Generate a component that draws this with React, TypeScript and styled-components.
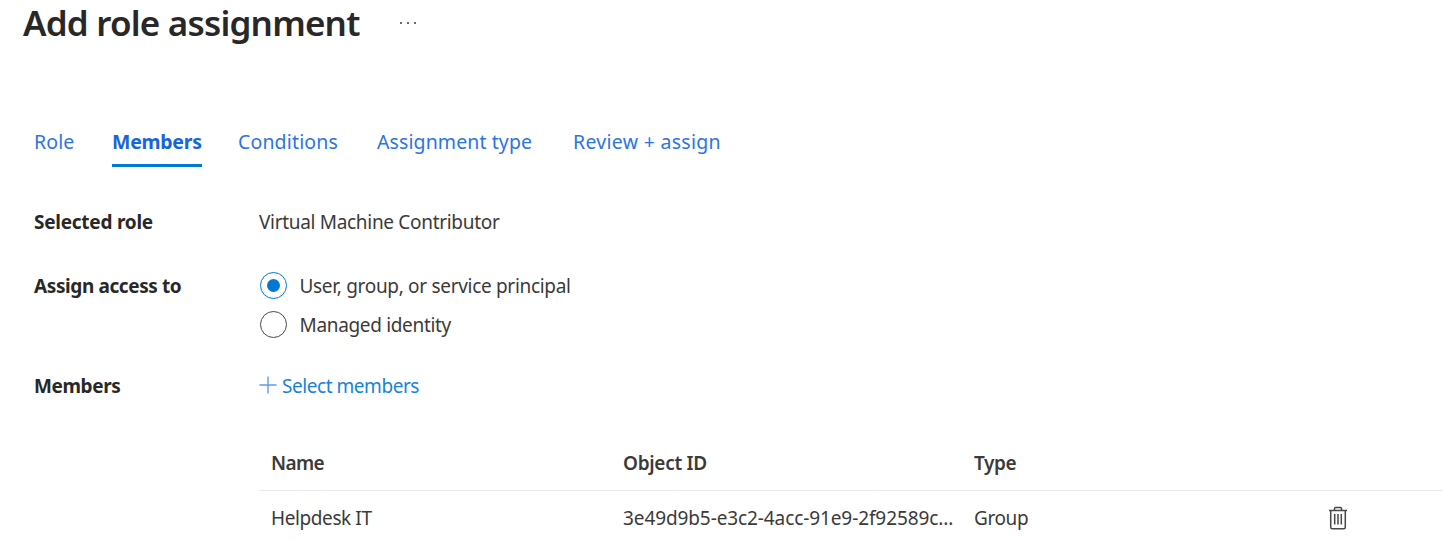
import React from "react";
import styled, { createGlobalStyle } from "styled-components";

const GlobalStyle = createGlobalStyle`
  * { box-sizing: border-box; }
  body {
    margin: 0;
    background: #fff;
    color: #3b3a39;
    font-family: "Noto Sans", "Open Sans", sans-serif;
    font-size: 19px;
    line-height: 26px;
    overflow: hidden;
  }
`;

const Page = styled.main`
  width: 1443px;
  height: 541px;
  overflow: hidden;
`;

const Header = styled.header`
  display: flex;
  align-items: center;
  gap: 39px;
  height: 45px;
  padding-left: 23px;
`;

const Title = styled.h1`
  margin: 0;
  min-width: 337px;
  font-size: 35px;
  line-height: 44px;
  font-weight: 600;
  letter-spacing: -0.8px;
  color: #292827;
  white-space: nowrap;
`;

const Tabs = styled.nav`
  display: flex;
  margin-top: 84px;
  padding-left: 34px;
`;

const Tab = styled.a<{ $width: number; $gap: number; $track: number; $active?: boolean }>`
  width: ${(p) => p.$width}px;
  height: 38px;
  margin-right: ${(p) => p.$gap}px;
  border-bottom: 3px solid ${(p) => (p.$active ? "#0078d4" : "transparent")};
  font-size: 19.5px;
  font-weight: ${(p) => (p.$active ? 700 : 400)};
  letter-spacing: ${(p) => p.$track}px;
  color: ${(p) => (p.$active ? "#1765dc" : "#2b74e4")};
  white-space: nowrap;
`;

const Field = styled.section<{ $top: number }>`
  display: grid;
  grid-template-columns: 225px 1fr;
  margin-top: ${(p) => p.$top}px;
  padding-left: 34px;
`;

const Label = styled.div<{ $track: number }>`
  font-weight: 700;
  letter-spacing: ${(p) => p.$track}px;
  color: #292827;
`;

const Text = styled.span<{ $track: number }>`
  letter-spacing: ${(p) => p.$track}px;
  white-space: nowrap;
`;

const Options = styled.div`
  display: flex;
  flex-direction: column;
  gap: 13px;
`;

const Option = styled.label`
  display: flex;
  align-items: center;
  height: 26px;
  gap: 12.5px;
  padding-left: 1px;
`;

const Radio = styled.span<{ $checked?: boolean }>`
  display: grid;
  place-items: center;
  width: 27px;
  height: 27px;
  margin-bottom: 1px;
  border: 1.5px solid ${(p) => (p.$checked ? "#0078d4" : "#494847")};
  border-radius: 50%;

  &::after {
    content: "";
    width: 13px;
    height: 13px;
    border-radius: 50%;
    background: ${(p) => (p.$checked ? "#0078d4" : "transparent")};
  }
`;

const SelectLink = styled.a`
  display: flex;
  align-items: center;
  gap: 5px;
  color: #1683db;

  svg {
    margin-bottom: 3px;
  }
`;

const Table = styled.div`
  margin: 40px 0 0 259px;
`;

const Row = styled.div<{ $head?: boolean }>`
  display: grid;
  grid-template-columns: 352px 351px 354px 1fr;
  align-items: center;
  height: ${(p) => (p.$head ? 52 : 54)}px;
  padding-left: 12px;
  padding-bottom: ${(p) => (p.$head ? 3 : 0)}px;
  border-bottom: ${(p) => (p.$head ? "1px solid #edebe9" : "0")};
  font-weight: ${(p) => (p.$head ? 600 : 400)};
`;

const Dots = () => (
  <svg width="18" height="4" viewBox="0 0 18 4" fill="#6b6a69">
    <rect x="1" y="1" width="2" height="2" />
    <rect x="8" y="1" width="2" height="2" />
    <rect x="15" y="1" width="2" height="2" />
  </svg>
);

const Plus = () => (
  <svg width="18" height="18" viewBox="0 0 18 18" stroke="#5b9fe8" strokeWidth="1.4">
    <path d="M9 0.5v17M0.5 9h17" />
  </svg>
);

const Trash = () => (
  <svg width="20" height="24" viewBox="0 0 20 24" fill="none" stroke="#494847" strokeWidth="1.5">
    <path d="M1 4.5h18M6.5 4V2.4q0-1 1-1h5q1 0 1 1V4M2.7 4.5v16.7q0 1.5 1.5 1.5h11.6q1.5 0 1.5-1.5V4.5" />
    <path d="M6.7 8v10.5M10 8v10.5M13.3 8v10.5" />
  </svg>
);

export default function App() {
  return (
    <Page>
      <GlobalStyle />
      <Header>
        <Title>Add role assignment</Title>
        <Dots />
      </Header>
      <Tabs>
        <Tab $width={40} $gap={38} $track={0.1}>Role</Tab>
        <Tab $width={90} $gap={36} $track={-0.25} $active>Members</Tab>
        <Tab $width={100} $gap={39} $track={0.15}>Conditions</Tab>
        <Tab $width={155} $gap={41} $track={0.1}>Assignment type</Tab>
        <Tab $width={148} $gap={0} $track={0.28}>Review + assign</Tab>
      </Tabs>
      <Field $top={42}>
        <Label $track={-0.25}>Selected role</Label>
        <Text $track={-0.31}>Virtual Machine Contributor</Text>
      </Field>
      <Field $top={38}>
        <Label $track={-0.4}>Assign access to</Label>
        <Options>
          <Option>
            <Radio $checked />
            <Text $track={-0.31}>User, group, or service principal</Text>
          </Option>
          <Option>
            <Radio />
            <Text $track={-0.33}>Managed identity</Text>
          </Option>
        </Options>
      </Field>
      <Field $top={35}>
        <Label $track={-0.4}>Members</Label>
        <SelectLink>
          <Plus />
          <Text $track={-0.45}>Select members</Text>
        </SelectLink>
      </Field>
      <Table>
        <Row $head>
          <Text $track={-0.6}>Name</Text>
          <Text $track={-0.3}>Object ID</Text>
          <Text $track={-0.4}>Type</Text>
        </Row>
        <Row>
          <Text $track={-0.4}>Helpdesk IT</Text>
          <Text $track={-0.1}>3e49d9b5-e3c2-4acc-91e9-2f92589c...</Text>
          <Text $track={-0.4}>Group</Text>
          <Trash />
        </Row>
      </Table>
    </Page>
  );
}
